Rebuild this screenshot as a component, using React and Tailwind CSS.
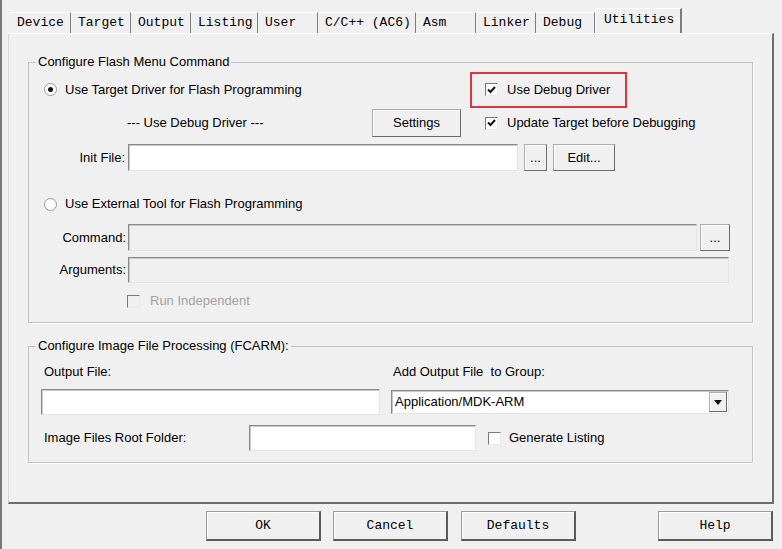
import React from 'react';

const sans = { fontFamily: '"Liberation Sans", Arial, sans-serif' };

const tabs = [
  { label: 'Device', w: 'w-[61px]' },
  { label: 'Target', w: 'w-[60px]' },
  { label: 'Output', w: 'w-[60px]' },
  { label: 'Listing', w: 'w-[67px]' },
  { label: 'User', w: 'w-[60px]' },
  { label: 'C/C++ (AC6)', w: 'w-[98px]' },
  { label: 'Asm', w: 'w-[60px]' },
  { label: 'Linker', w: 'w-[60px]' },
  { label: 'Debug', w: 'w-[59px]' },
];

const Check = ({ checked, disabled }) => (
  <div
    className={`w-[13px] h-[13px] shrink-0 border border-t-[#7a7a7a] border-l-[#7a7a7a] border-r-[#e8e8e8] border-b-[#e8e8e8] flex items-center justify-center ${
      disabled ? 'bg-[#f0f0f0]' : 'bg-white'
    }`}
  >
    {checked && (
      <svg width="9" height="8" viewBox="0 0 9 8">
        <path d="M1 3.5 L3.5 6 L8 1" stroke="#111" strokeWidth="2" fill="none" />
      </svg>
    )}
  </div>
);

const Radio = ({ on }) => (
  <div className="w-[13px] h-[13px] shrink-0 rounded-full border border-[#9a9a9a] bg-white flex items-center justify-center">
    {on && <div className="w-[5px] h-[5px] rounded-full bg-[#111]" />}
  </div>
);

const Button = ({ children, className = '' }) => (
  <div
    className={`flex items-center justify-center border border-[#adadad] border-r-[#6a6a6a] border-b-[#6a6a6a] bg-[#f0f0f0] shadow-[inset_1px_1px_0_#fff] text-[13px] text-black ${className}`}
    style={sans}
  >
    {children}
  </div>
);

const Field = ({ className = '', white = true, children }) => (
  <div
    className={`border border-t-[#8a8a8a] border-l-[#8a8a8a] border-r-[#e4e4e4] border-b-[#e4e4e4] shadow-[inset_1px_1px_0_#c8c8c8] ${
      white ? 'bg-white' : 'bg-[#f0f0f0]'
    } ${className}`}
  >
    {children}
  </div>
);

const DlgButton = ({ children, className = '' }) => (
  <div
    className={`h-[30px] w-[115px] flex items-center justify-center border border-[#9a9a9a] border-r-2 border-b-2 border-r-[#5a5a5a] border-b-[#5a5a5a] shadow-[inset_1px_1px_0_#fff] text-[13px] text-black ${className}`}
    style={{ fontFamily: '"Liberation Mono", "Noto Sans CJK SC", monospace' }}
  >
    {children}
  </div>
);

export default function App() {
  return (
    <div
      className="w-[782px] h-[549px] bg-[#f0f0f0] border-l-2 border-[#7a7a7a] overflow-hidden text-black"
      style={sans}
    >
      {/* tab strip */}
      <div
        className="flex items-end h-[33px] pl-[8px] pt-[8px] text-[13px]"
        style={{ fontFamily: '"Liberation Mono", "Noto Sans CJK SC", monospace' }}
      >
        {tabs.map((t) => (
          <div
            key={t.label}
            className={`${t.w} h-[21px] flex items-center pl-[7px] border-t border-t-white border-r border-r-[#7d7d7d] whitespace-nowrap`}
          >
            {t.label}
          </div>
        ))}
        <div className="w-[87px] h-[25px] flex items-center pl-[8px] pb-[2px] border-t border-l border-white border-r-2 border-r-[#7d7d7d] whitespace-nowrap bg-[#f0f0f0]">
          Utilities
        </div>
      </div>

      {/* tab panel */}
      <div className="ml-[6px] w-[766px] h-[471px] border-l border-l-[#d8d8d8] border-t border-t-white border-r-2 border-r-[#6d6d6d] border-b-2 border-b-[#6d6d6d] pl-[19px] pt-[20px] text-[13px]">
        {/* group 1 */}
        <fieldset className="w-[725px] h-[269px] border border-[#c4c4c4] shadow-[1px_1px_0_#fff]">
          <legend className="ml-[7px] px-[2px] leading-[16px]">Configure Flash Menu Command</legend>

          <div className="flex items-center h-[35px] mt-[2px]">
            <div className="w-[441px] flex items-center pl-[15px] gap-[8px]">
              <Radio on />
              <span>Use Target Driver for Flash Programming</span>
            </div>
            <div className="w-[157px] h-[36px] border-2 border-[#d8373f] flex items-center pl-[13px] gap-[9px]">
              <Check checked />
              <span>Use Debug Driver</span>
            </div>
          </div>

          <div className="flex items-center h-[28px] mt-[2px]">
            <div className="w-[343px] pl-[98px]">--- Use Debug Driver ---</div>
            <Button className="w-[89px] h-[28px]">Settings</Button>
            <div className="ml-[24px] flex items-center gap-[9px]">
              <Check checked />
              <span>Update Target before Debugging</span>
            </div>
          </div>

          <div className="flex items-center h-[27px] mt-[7px]">
            <div className="w-[99px] text-right pr-[3px]">Init File:</div>
            <Field className="w-[390px] h-[27px]" />
            <Button className="ml-[6px] w-[23px] h-[27px] text-[11px] text-[#666]">...</Button>
            <Button className="ml-[6px] w-[62px] h-[27px]">Edit...</Button>
          </div>

          <div className="flex items-center h-[20px] mt-[23px] pl-[15px] gap-[8px]">
            <Radio />
            <span>Use External Tool for Flash Programming</span>
          </div>

          <div className="flex items-center h-[27px] mt-[10px]">
            <div className="w-[99px] text-right pr-[2px]">Command:</div>
            <Field className="w-[569px] h-[27px]" white={false} />
            <Button className="ml-[3px] w-[30px] h-[27px] text-[11px] text-[#777]">...</Button>
          </div>

          <div className="flex items-center h-[26px] mt-[6px]">
            <div className="w-[99px] text-right pr-[2px]">Arguments:</div>
            <Field className="w-[601px] h-[26px]" white={false} />
          </div>

          <div className="flex items-center h-[18px] mt-[9px] pl-[98px] gap-[10px] text-[#a3a3a3]">
            <Check disabled />
            <span>Run Independent</span>
          </div>
        </fieldset>

        {/* group 2 */}
        <fieldset className="mt-[15px] w-[725px] h-[125px] border border-[#c4c4c4] shadow-[1px_1px_0_#fff]">
          <legend className="ml-[7px] px-[2px] leading-[16px]">Configure Image File Processing (FCARM):</legend>

          <div className="flex h-[18px] mt-[8px]">
            <div className="w-[364px] pl-[15px]">Output File:</div>
            <div>Add Output File&nbsp;&nbsp;to Group:</div>
          </div>

          <div className="flex items-center h-[26px] mt-[9px]">
            <Field className="ml-[12px] w-[339px] h-[26px]" />
            <Field className="ml-[11px] w-[338px] h-[24px] flex items-center justify-between pl-[3px] pr-[1px]">
              <span>Application/MDK-ARM</span>
              <Button className="w-[18px] h-[20px]">
                <svg width="8" height="5" viewBox="0 0 8 5">
                  <path d="M0 0 H8 L4 5 Z" fill="#111" />
                </svg>
              </Button>
            </Field>
          </div>

          <div className="flex items-center h-[26px] mt-[10px]">
            <div className="w-[220px] pl-[15px]">Image Files Root Folder:</div>
            <Field className="w-[227px] h-[26px]" />
            <div className="ml-[12px] flex items-center gap-[8px]">
              <Check />
              <span>Generate Listing</span>
            </div>
          </div>
        </fieldset>
      </div>

      {/* dialog buttons */}
      <div className="flex mt-[7px]">
        <DlgButton className="ml-[204px]">OK</DlgButton>
        <DlgButton className="ml-[12px]">Cancel</DlgButton>
        <DlgButton className="ml-[13px]">Defaults</DlgButton>
        <DlgButton className="ml-[82px]">Help</DlgButton>
      </div>
    </div>
  );
}
